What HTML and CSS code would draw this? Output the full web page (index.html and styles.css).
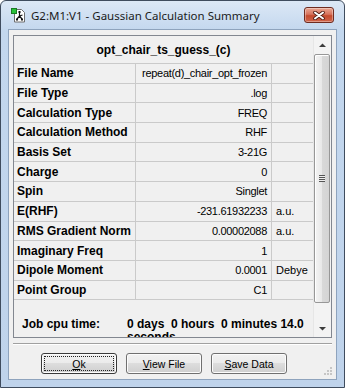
FILE: index.html
```html
<!DOCTYPE html>
<html lang="en">

<head>
    <meta charset="UTF-8">
    <meta name="viewport" content="width=device-width, initial-scale=1.0">
    <title>G2:M1:V1 - Gaussian Calculation Summary</title>
    <link rel="stylesheet" href="styles.css">
</head>

<body>
<div class="window">
    <!-- Title bar -->
    <div class="titlebar">
        <svg class="app-icon" width="15" height="15" viewBox="0 0 15 15">
            <path d="M3.5 1.5h7l3 3v9.5h-10z" fill="#fff" stroke="#6d6d6d"/>
            <rect x="0.5" y="0.5" width="5" height="5" fill="#27c23a" stroke="#1b7a25"/>
            <path d="M8.5 4v4M6 11l2.5-3 2.5 3M8.5 8l3-1" stroke="#111" stroke-width="1.2" fill="none"/>
            <rect x="7.5" y="3" width="2" height="2" fill="#111"/>
            <rect x="5" y="10.5" width="2" height="2" fill="#111"/>
            <rect x="10" y="10.5" width="2" height="2" fill="#111"/>
        </svg>
        <span class="title">G2:M1:V1 - Gaussian Calculation Summary</span>
        <div class="close-btn">
            <svg width="12" height="9" viewBox="0 0 12 9">
                <path d="M2 1.5l8 6M10 1.5l-8 6" stroke="#4a1a12" stroke-width="3.6" stroke-linecap="round"/>
                <path d="M2 1.5l8 6M10 1.5l-8 6" stroke="#fff" stroke-width="2" stroke-linecap="round"/>
            </svg>
        </div>
    </div>

    <div class="client">
        <div class="panel">
            <div class="sheet">
                <div class="sheet-head">opt_chair_ts_guess_(c)</div>

                <div class="rows">
                    <div class="cell label">File Name</div>
                    <div class="cell value">repeat(d)_chair_opt_frozen</div>
                    <div class="cell unit"></div>

                    <div class="cell label">File Type</div>
                    <div class="cell value">.log</div>
                    <div class="cell unit"></div>

                    <div class="cell label">Calculation Type</div>
                    <div class="cell value">FREQ</div>
                    <div class="cell unit"></div>

                    <div class="cell label">Calculation Method</div>
                    <div class="cell value">RHF</div>
                    <div class="cell unit"></div>

                    <div class="cell label">Basis Set</div>
                    <div class="cell value">3-21G</div>
                    <div class="cell unit"></div>

                    <div class="cell label">Charge</div>
                    <div class="cell value">0</div>
                    <div class="cell unit"></div>

                    <div class="cell label">Spin</div>
                    <div class="cell value">Singlet</div>
                    <div class="cell unit"></div>

                    <div class="cell label">E(RHF)</div>
                    <div class="cell value">-231.61932233</div>
                    <div class="cell unit">a.u.</div>

                    <div class="cell label">RMS Gradient Norm</div>
                    <div class="cell value">0.00002088</div>
                    <div class="cell unit">a.u.</div>

                    <div class="cell label">Imaginary Freq</div>
                    <div class="cell value">1</div>
                    <div class="cell unit"></div>

                    <div class="cell label">Dipole Moment</div>
                    <div class="cell value">0.0001</div>
                    <div class="cell unit">Debye</div>

                    <div class="cell label">Point Group</div>
                    <div class="cell value">C1</div>
                    <div class="cell unit"></div>
                </div>

                <div class="job">
                    <span class="job-label">Job cpu time:</span>
                    <span class="job-value">0 days  0 hours  0 minutes 14.0 seconds</span>
                </div>
            </div>

            <!-- Vertical scrollbar -->
            <div class="scrollbar">
                <div class="sb-btn">
                    <svg width="7" height="4" viewBox="0 0 7 4"><path d="M0 4L3.5 0.5 7 4z" fill="#3c3c3c"/></svg>
                </div>
                <div class="sb-track">
                    <div class="sb-thumb">
                        <span class="grip-lines"></span>
                    </div>
                </div>
                <div class="sb-btn">
                    <svg width="7" height="4" viewBox="0 0 7 4"><path d="M0 0L3.5 3.5 7 0z" fill="#3c3c3c"/></svg>
                </div>
            </div>
        </div>

        <div class="separator"></div>

        <div class="buttons">
            <button class="btn btn-default"><span class="focus"><u>O</u>k</span></button>
            <button class="btn"><span><u>V</u>iew File</span></button>
            <button class="btn"><span><u>S</u>ave Data</span></button>
        </div>

        <svg class="size-grip" width="11" height="11" viewBox="0 0 11 11">
            <rect x="8" y="2" width="2" height="2" fill="#c6c6c6"/>
            <rect x="5" y="5" width="2" height="2" fill="#c6c6c6"/>
            <rect x="8" y="5" width="2" height="2" fill="#c6c6c6"/>
            <rect x="2" y="8" width="2" height="2" fill="#c6c6c6"/>
            <rect x="5" y="8" width="2" height="2" fill="#c6c6c6"/>
            <rect x="8" y="8" width="2" height="2" fill="#c6c6c6"/>
        </svg>
    </div>
</div>
</body>

</html>
```

FILE: styles.css
```css
body {
    margin: 0;
    padding: 0;
    background-color: #fff;
    font-family: 'Liberation Sans', Arial, sans-serif;
    color: #000;
}

.window {
    box-sizing: border-box;
    width: 345px;
    height: 388px;
    border: 1px solid #3f4c5e;
    border-radius: 6px 6px 0 0;
    background: linear-gradient(#dce8f6, #c3d7ee 30px, #bfd3eb);
    padding: 0 7px 7px;
    display: flex;
    flex-direction: column;
}

/* Title bar */
.titlebar {
    height: 28px;
    display: flex;
    align-items: center;
    padding-left: 3px;
}

.app-icon {
    display: block;
    margin-right: 5px;
}

.title {
    font-family: 'Noto Sans', 'Open Sans', sans-serif;
    font-size: 11.5px;
    color: #1b1b1b;
    white-space: nowrap;
}

.close-btn {
    margin-left: auto;
    margin-right: 3px;
    width: 30px;
    height: 16px;
    box-sizing: border-box;
    border: 1px solid #6e2b20;
    border-radius: 3px;
    background: linear-gradient(#eaa793, #d7735d 45%, #c44a2e 55%, #d0654b);
    box-shadow: inset 0 0 0 1px rgba(255, 255, 255, 0.35);
    display: flex;
    align-items: center;
    justify-content: center;
}

.close-btn svg {
    display: block;
}

/* Client area */
.client {
    position: relative;
    flex: 1;
    background-color: #f0f0f0;
    border: 1px solid #8ea3bd;
    padding: 5px 4px 0;
    display: flex;
    flex-direction: column;
}

.panel {
    height: 303px;
    box-sizing: border-box;
    border: 1px solid #828790;
    display: flex;
    overflow: hidden;
}

.sheet {
    flex: 1;
    display: flex;
    flex-direction: column;
    overflow: hidden;
}

.sheet-head {
    height: 28px;
    box-sizing: border-box;
    border-bottom: 1px solid #cacaca;
    display: flex;
    align-items: center;
    justify-content: center;
    font-weight: bold;
    font-size: 12px;
    padding-top: 1px;
}

.rows {
    display: grid;
    grid-template-columns: 122px 136px 1fr;
    grid-auto-rows: 19.7px;
}

.cell {
    box-sizing: border-box;
    border-bottom: 1px solid #cacaca;
    display: flex;
    align-items: center;
    white-space: nowrap;
    overflow: hidden;
}

.label {
    border-right: 1px solid #cacaca;
    padding-left: 3px;
    font-weight: bold;
    font-size: 12px;
}

.value {
    border-right: 1px solid #cacaca;
    justify-content: flex-end;
    padding-right: 4px;
    font-size: 11px;
    letter-spacing: -0.3px;
}

.unit {
    padding-left: 4px;
    font-size: 11px;
}

.job {
    flex: 1;
    display: flex;
    padding: 18px 0 0 8px;
    font-weight: bold;
    font-size: 12px;
    line-height: 12.5px;
    overflow: hidden;
}

.job-label {
    width: 105px;
    flex-shrink: 0;
}

.job-value {
    width: 182px;
    white-space: pre-wrap;
}

/* Scrollbar */
.scrollbar {
    width: 17px;
    background-color: #f3f3f3;
    border-left: 1px solid #e6e6e6;
    display: flex;
    flex-direction: column;
}

.sb-btn {
    height: 17px;
    display: flex;
    align-items: center;
    justify-content: center;
}

.sb-btn svg {
    display: block;
}

.sb-track {
    flex: 1;
    padding: 1px 1px 17px 0;
    display: flex;
}

.sb-thumb {
    flex: 1;
    border: 1px solid #979797;
    border-radius: 2px;
    background: linear-gradient(to right, #f4f4f4, #e8e8e8 50%, #d9d9d9 51%, #d4d4d4);
    box-shadow: inset 1px 1px 0 #fff;
    display: flex;
    align-items: center;
    justify-content: center;
}

.grip-lines {
    width: 6px;
    height: 7px;
    background: repeating-linear-gradient(#555 0, #555 1px, #eee 1px, #eee 2px);
}

/* Bottom buttons */
.separator {
    margin-top: 5px;
    border-top: 1px solid #a0a0a0;
    border-bottom: 1px solid #fff;
}

.buttons {
    display: flex;
    gap: 9px;
    padding: 8px 0 0 28px;
}

.btn {
    width: 76px;
    height: 21px;
    padding: 0;
    border: 1px solid #707070;
    border-radius: 3px;
    background: linear-gradient(#f2f2f2, #ebebeb 49%, #dddddd 50%, #cfcfcf);
    box-shadow: inset 0 0 0 1px #fcfcfc;
    font-family: 'Liberation Sans', Arial, sans-serif;
    font-size: 10.5px;
    color: #000;
    display: flex;
    align-items: center;
    justify-content: center;
}

.btn-default {
    border-color: #3a3a3a;
}

.btn .focus {
    box-sizing: border-box;
    width: 70px;
    height: 15px;
    border: 1px dotted #222;
    display: flex;
    align-items: center;
    justify-content: center;
}

.size-grip {
    position: absolute;
    right: 3px;
    bottom: 3px;
}
```
